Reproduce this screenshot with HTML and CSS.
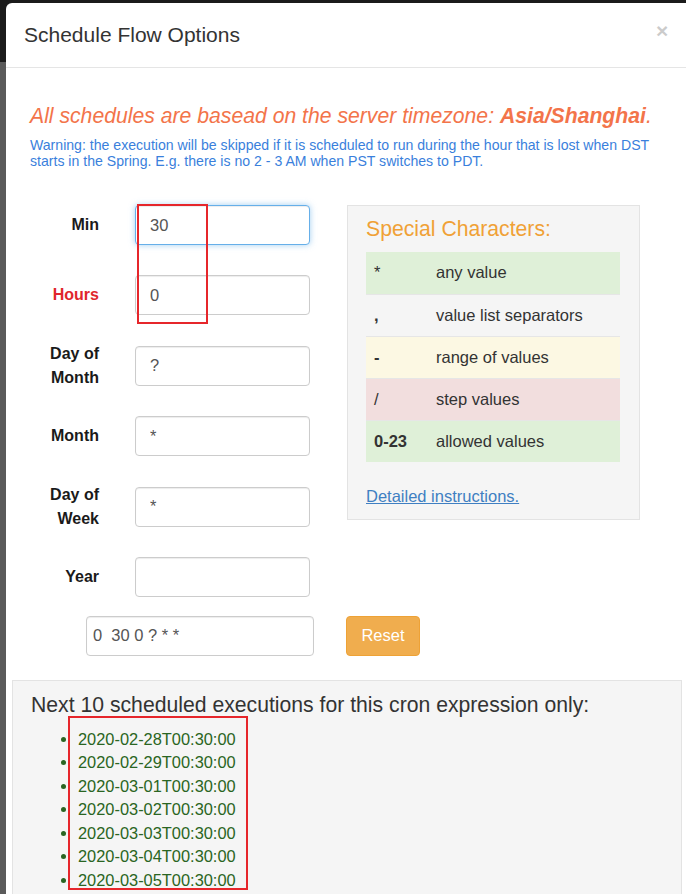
FILE: index.html
```html
<!DOCTYPE html>
<html>
<head>
<meta charset="utf-8">
<link rel="stylesheet" href="styles.css">
</head>
<body>
<div class="modal">
  <div class="modal-header">
    <h4 class="modal-title">Schedule Flow Options</h4>
    <span class="close">×</span>
  </div>
  <div class="modal-body">
    <p class="tz">All schedules are basead on the server timezone: <b>Asia/Shanghai</b>.</p>
    <p class="warn">Warning: the execution will be skipped if it is scheduled to run during the hour that is lost when DST<br>starts in the Spring. E.g. there is no 2 - 3 AM when PST switches to PDT.</p>

    <div class="main">
      <div class="fields">
        <div class="field"><label>Min</label><input class="focus" type="text" value="30"></div>
        <div class="field"><label class="req">Hours</label><input type="text" value="0"></div>
        <div class="field"><label>Day of Month</label><input type="text" value="?"></div>
        <div class="field"><label>Month</label><input type="text" value="*"></div>
        <div class="field"><label>Day of Week</label><input type="text" value="*"></div>
        <div class="field"><label>Year</label><input type="text" value=""></div>
      </div>
      <div class="panel">
        <h3 class="panel-title">Special Characters:</h3>
        <table class="chars">
          <tr class="ok"><td class="c light">*</td><td>any value</td></tr>
          <tr><td class="c">,</td><td>value list separators</td></tr>
          <tr class="warnrow"><td class="c">-</td><td>range of values</td></tr>
          <tr class="bad"><td class="c light">/</td><td>step values</td></tr>
          <tr class="ok"><td class="c">0-23</td><td>allowed values</td></tr>
        </table>
        <a class="link" href="#">Detailed instructions.</a>
      </div>
    </div>

    <div class="cron-row">
      <input class="cron" type="text" value="0  30 0 ? * *">
      <button class="btn-reset">Reset</button>
    </div>

    <div class="next">
      <h3 class="next-title">Next 10 scheduled executions for this cron expression only:</h3>
      <ul class="dates">
        <li>2020-02-28T00:30:00</li>
        <li>2020-02-29T00:30:00</li>
        <li>2020-03-01T00:30:00</li>
        <li>2020-03-02T00:30:00</li>
        <li>2020-03-03T00:30:00</li>
        <li>2020-03-04T00:30:00</li>
        <li>2020-03-05T00:30:00</li>
      </ul>
    </div>
  </div>
</div>
<div class="mark mark-fields"></div>
<div class="mark mark-dates"></div>
</body>
</html>
```

FILE: styles.css
```css
html, body {
  margin: 0;
  padding: 0;
  overflow: hidden;
  height: 894px;
}
body {
  position: relative;
  font-family: "Liberation Sans", Arial, sans-serif;
  color: #333;
  background: linear-gradient(#1b1b1b 0, #1b1b1b 62px, #5a5a5a 62px, #5a5a5a 100%);
}
.modal {
  margin: 3px 0 0 6px;
  width: 700px;
  height: 891px;
  overflow: hidden;
  background: #fff;
  border-top-left-radius: 6px;
}
.modal-header {
  position: relative;
  padding: 18px 18px;
  border-bottom: 1px solid #e5e5e5;
}
.modal-title {
  margin: 0;
  font-size: 21px;
  line-height: 28px;
  font-weight: normal;
  color: #333;
}
.close {
  position: absolute;
  left: 650px;
  top: 14px;
  font-size: 21px;
  font-weight: bold;
  color: #000;
  opacity: 0.2;
  line-height: 28px;
}
.modal-body {
  padding: 34px 24px 0 24px;
}
.tz {
  margin: 0;
  font-size: 21.2px;
  line-height: 28px;
  font-style: italic;
  color: #f3744a;
}
.warn {
  margin: 7px 0 0 0;
  font-size: 14.1px;
  line-height: 16px;
  color: #3a7fdc;
  white-space: nowrap;
}
.main {
  display: flex;
  align-items: flex-start;
  gap: 17px;
  margin-top: 36px;
}
.fields {
  width: 300px;
  display: flex;
  flex-direction: column;
  gap: 30.4px;
}
.field {
  display: flex;
  align-items: center;
  gap: 36px;
  height: 40px;
}
.field label {
  width: 69px;
  flex: none;
  text-align: right;
  font-weight: bold;
  font-size: 16px;
  line-height: 24px;
  color: #1a1a1a;
}
.field label.req {
  color: #e0262c;
}
input {
  box-sizing: border-box;
  height: 40px;
  width: 175px;
  padding: 6px 14px;
  font-family: "Liberation Sans", Arial, sans-serif;
  font-size: 16.5px;
  color: #555;
  border: 1px solid #ccc;
  border-radius: 4px;
  background: #fff;
  box-shadow: inset 0 1px 1px rgba(0,0,0,.075);
}
input.focus {
  border-color: #66afe9;
  box-shadow: inset 0 1px 1px rgba(0,0,0,.075), 0 0 6px rgba(102,175,233,.6);
}
.panel {
  box-sizing: border-box;
  width: 293px;
  padding: 11px 19px 13px 18px;
  background: #f5f5f5;
  border: 1px solid #e3e3e3;
}
.panel-title {
  margin: 0 0 11px 0;
  font-size: 21.2px;
  line-height: 24px;
  font-weight: normal;
  color: #f0a136;
}
.chars {
  width: 100%;
  border-collapse: collapse;
  font-size: 16.5px;
}
.chars td {
  height: 42px;
  box-sizing: border-box;
  padding: 0 8px 0 7px;
  border-top: 1px solid #e6e6e6;
  color: #333;
  vertical-align: middle;
}
.chars tr:first-child td { border-top: none; }
.chars td.c {
  width: 63px;
  box-sizing: border-box;
  font-weight: bold;
  padding-left: 8px;
}
.chars td.c.light {
  font-weight: normal;
}
.chars tr.ok td { background: #dff0d8; }
.chars tr.warnrow td { background: #fcf8e3; }
.chars tr.bad td { background: #f2dede; }
.link {
  display: block;
  margin-top: 24px;
  font-size: 16.5px;
  line-height: 20px;
  color: #3f7fc2;
  text-decoration: underline;
}
.cron-row {
  display: flex;
  align-items: center;
  gap: 32px;
  margin-top: 19px;
  padding-left: 56px;
}
input.cron {
  width: 228px;
  padding-left: 6px;
}
.btn-reset {
  width: 74px;
  height: 40px;
  border: 1px solid #eea236;
  border-radius: 4px;
  background: #f0ad4e;
  color: #fff;
  font-family: "Liberation Sans", Arial, sans-serif;
  font-size: 16.5px;
}
.next {
  margin: 24px 0 0 -18px;
  width: 670px;
  box-sizing: border-box;
  padding: 10px 18px 20px;
  background: #f5f5f5;
  border: 1px solid #e3e3e3;
}
.next-title {
  margin: 0;
  font-size: 21.2px;
  line-height: 28px;
  font-weight: normal;
  color: #333;
}
.dates {
  margin: 9px 0 0 0;
  padding-left: 47px;
  font-size: 16.4px;
  line-height: 23.5px;
  color: #2a6522;
}
.mark {
  position: absolute;
  box-sizing: border-box;
  border: 2px solid #e6262b;
}
.mark-fields {
  left: 137px;
  top: 204px;
  width: 71px;
  height: 120px;
}
.mark-dates {
  left: 68px;
  top: 716px;
  width: 180px;
  height: 174px;
}
```
